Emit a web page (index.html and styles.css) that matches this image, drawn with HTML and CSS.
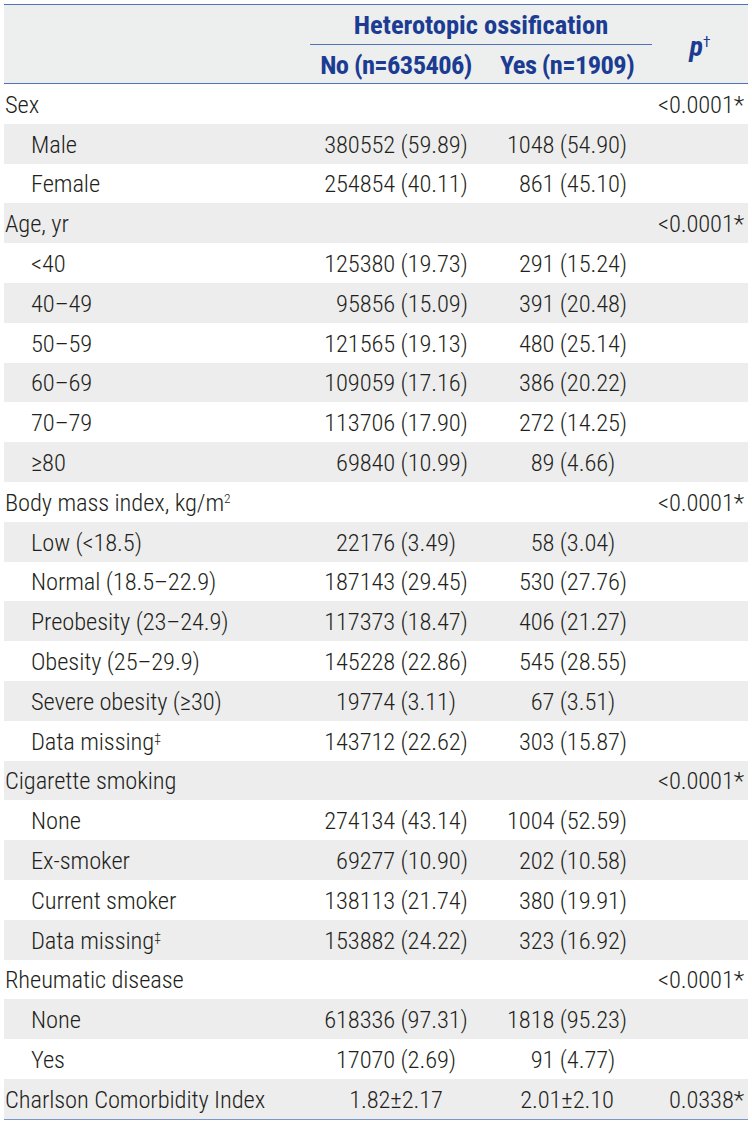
FILE: index.html
```html
<!DOCTYPE html>
<html lang="en">
<head>
<meta charset="utf-8">
<title>Heterotopic ossification</title>
<link rel="stylesheet" href="styles.css">
</head>
<body>
<table class="tbl">
  <colgroup>
    <col class="c-label">
    <col class="c-no">
    <col class="c-yes">
    <col class="c-p">
  </colgroup>
  <thead>
    <tr class="h1">
      <th class="corner" rowspan="2"></th>
      <th class="span" colspan="2">Heterotopic ossification</th>
      <th class="pcol" rowspan="2"><i>p</i><sup>†</sup></th>
    </tr>
    <tr class="h2">
      <th>No (n=635406)</th>
      <th>Yes (n=1909)</th>
    </tr>
  </thead>
  <tbody>
    <tr><td class="cat">Sex</td><td></td><td></td><td class="p">&lt;0.0001*</td></tr>
    <tr><td class="sub">Male</td><td class="n">380552 (59.89)</td><td class="n">1048 (54.90)</td><td></td></tr>
    <tr><td class="sub">Female</td><td class="n">254854 (40.11)</td><td class="n">&#8199;861 (45.10)</td><td></td></tr>
    <tr><td class="cat">Age, yr</td><td></td><td></td><td class="p">&lt;0.0001*</td></tr>
    <tr><td class="sub">&lt;40</td><td class="n">125380 (19.73)</td><td class="n">&#8199;291 (15.24)</td><td></td></tr>
    <tr><td class="sub">40–49</td><td class="n">&#8199;95856 (15.09)</td><td class="n">&#8199;391 (20.48)</td><td></td></tr>
    <tr><td class="sub">50–59</td><td class="n">121565 (19.13)</td><td class="n">&#8199;480 (25.14)</td><td></td></tr>
    <tr><td class="sub">60–69</td><td class="n">109059 (17.16)</td><td class="n">&#8199;386 (20.22)</td><td></td></tr>
    <tr><td class="sub">70–79</td><td class="n">113706 (17.90)</td><td class="n">&#8199;272 (14.25)</td><td></td></tr>
    <tr><td class="sub">≥80</td><td class="n">&#8199;69840 (10.99)</td><td class="n">&#8199;89 (4.66)</td><td></td></tr>
    <tr><td class="cat">Body mass index, kg/m<sup>2</sup></td><td></td><td></td><td class="p">&lt;0.0001*</td></tr>
    <tr><td class="sub">Low (&lt;18.5)</td><td class="n">22176 (3.49)</td><td class="n">&#8199;58 (3.04)</td><td></td></tr>
    <tr><td class="sub">Normal (18.5–22.9)</td><td class="n">187143 (29.45)</td><td class="n">&#8199;530 (27.76)</td><td></td></tr>
    <tr><td class="sub">Preobesity (23–24.9)</td><td class="n">117373 (18.47)</td><td class="n">&#8199;406 (21.27)</td><td></td></tr>
    <tr><td class="sub">Obesity (25–29.9)</td><td class="n">145228 (22.86)</td><td class="n">&#8199;545 (28.55)</td><td></td></tr>
    <tr><td class="sub">Severe obesity (≥30)</td><td class="n">19774 (3.11)</td><td class="n">&#8199;67 (3.51)</td><td></td></tr>
    <tr><td class="sub">Data missing<sup>‡</sup></td><td class="n">143712 (22.62)</td><td class="n">&#8199;303 (15.87)</td><td></td></tr>
    <tr><td class="cat">Cigarette smoking</td><td></td><td></td><td class="p">&lt;0.0001*</td></tr>
    <tr><td class="sub">None</td><td class="n">274134 (43.14)</td><td class="n">1004 (52.59)</td><td></td></tr>
    <tr><td class="sub">Ex-smoker</td><td class="n">&#8199;69277 (10.90)</td><td class="n">&#8199;202 (10.58)</td><td></td></tr>
    <tr><td class="sub">Current smoker</td><td class="n">138113 (21.74)</td><td class="n">&#8199;380 (19.91)</td><td></td></tr>
    <tr><td class="sub">Data missing<sup>‡</sup></td><td class="n">153882 (24.22)</td><td class="n">&#8199;323 (16.92)</td><td></td></tr>
    <tr><td class="cat">Rheumatic disease</td><td></td><td></td><td class="p">&lt;0.0001*</td></tr>
    <tr><td class="sub">None</td><td class="n">618336 (97.31)</td><td class="n">1818 (95.23)</td><td></td></tr>
    <tr><td class="sub">Yes</td><td class="n">17070 (2.69)</td><td class="n">&#8199;91 (4.77)</td><td></td></tr>
    <tr><td class="cat">Charlson Comorbidity Index</td><td class="n">1.82±2.17</td><td class="n">2.01±2.10</td><td class="p">0.0338*</td></tr>
  </tbody>
</table>
</body>
</html>
```

FILE: styles.css
```css
html, body {
  margin: 0;
  padding: 0;
  background: #ffffff;
}

body {
  font-family: "Liberation Sans Narrow", "Arial Narrow", "Roboto Condensed", "DejaVu Sans Condensed", sans-serif;
  font-stretch: condensed;
  color: #231f20;
}

.tbl {
  margin: 4px 0 0 4px;
  width: 744px;
  border-collapse: separate;
  border-spacing: 0;
  table-layout: fixed;
  border-top: 1px solid #4f72b8;
  border-bottom: 1px solid #7d97cc;
  font-size: 24.5px;
  font-weight: 300;
  letter-spacing: -0.1px;
}

.c-label { width: 306px; }
.c-no { width: 172px; }
.c-yes { width: 170px; }
.c-p { width: 96px; }

thead th {
  background: #edefee;
  color: #1b3c92;
  font-weight: 700;
  font-size: 26.5px;
  letter-spacing: 0;
  padding: 0;
  text-align: center;
  vertical-align: middle;
}

.h1 th.span {
  height: 40px;
  border-bottom: 1px solid #4f72b8;
  box-sizing: border-box;
}

.h2 th {
  height: 39px;
  border-bottom: 1px solid #4f72b8;
  box-sizing: border-box;
  letter-spacing: -0.6px;
}

th.corner,
th.pcol {
  border-bottom: 1px solid #4f72b8;
}

th.pcol {
  padding-top: 4px;
  font-size: 28px;
}

th.pcol i {
  font-style: italic;
}

th.pcol sup,
td sup {
  font-size: 0.55em;
  line-height: 0;
  vertical-align: 0.6em;
}

th.pcol sup {
  font-weight: 400;
}

tbody td {
  height: 39.8px;
  box-sizing: border-box;
  padding: 1px 0 0 0;
  vertical-align: middle;
  white-space: nowrap;
}

tbody tr:nth-child(even) td {
  background: #ededed;
}

td.cat {
  padding-left: 1px;
}

td.sub {
  padding-left: 27px;
}

td.n {
  text-align: center;
}

td.p {
  text-align: right;
  padding-right: 4px;
}
```
